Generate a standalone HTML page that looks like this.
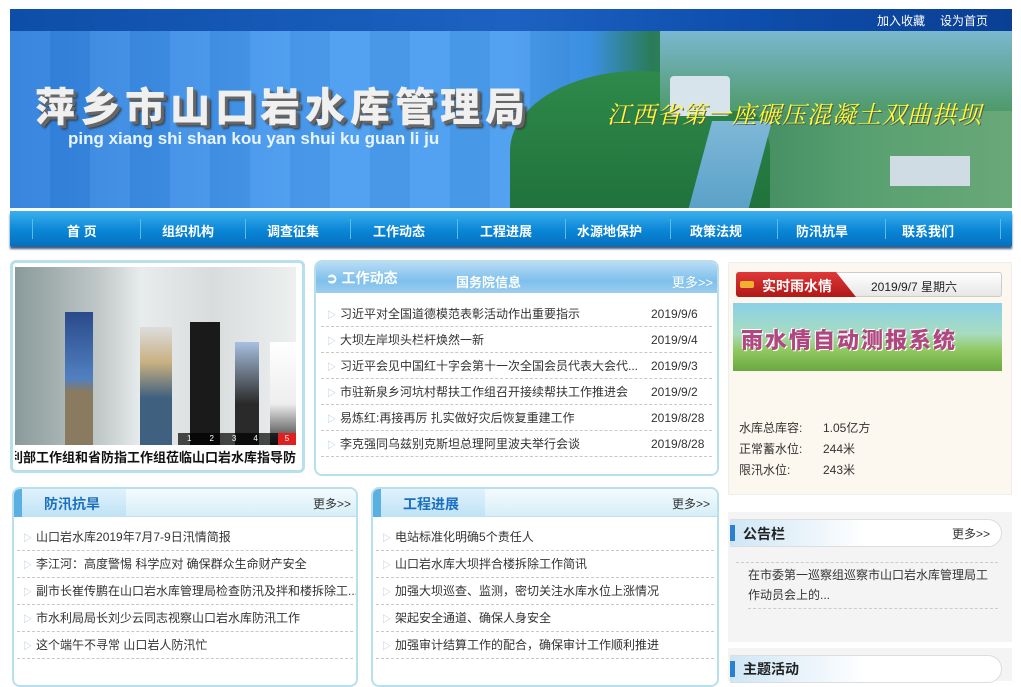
<!DOCTYPE html>
<html><head><meta charset="utf-8"><style>
*{margin:0;padding:0;box-sizing:border-box}
body{width:1021px;height:681px;overflow:hidden;background:#fff;font-family:"Liberation Sans","Noto Sans CJK SC",sans-serif;font-size:12px;color:#333;position:relative}
.a{position:absolute}
.top{left:10px;top:9px;width:1002px;height:22px;background:linear-gradient(90deg,#0d4ea8 0%,#1d62c2 50%,#0f4fae 72%,#0a3f94 100%)}
.top span{position:absolute;top:3px;color:#fff;font-size:12px}
.ban{left:10px;top:31px;width:1002px;height:177px;background:linear-gradient(90deg,#2f7fdc 0%,#4a9cf0 30%,#4a9df0 50%,#3b8fe0 58%,#2a7c58 64%,#3f8a60 72%,#58a070 85%,#6aa878 100%);overflow:hidden}
.nav{left:10px;top:211px;width:1002px;height:35px;background:linear-gradient(#3bb0ee,#0a86d6 55%,#0670c0);box-shadow:0 3px 2px #3a5f88}
.nav span{position:absolute;top:10px;color:#fff;font-weight:bold;font-size:13px}
.nav i{position:absolute;top:8px;width:1px;height:20px;background:#5bbce8}
.box{border:3px solid #b8e0ec;border-radius:6px}
.row{position:absolute;left:0;right:0;height:26px;border-bottom:1px dashed #c8c8c8;font-size:12px;color:#333;line-height:26px;white-space:nowrap}
.row b{font-weight:normal;color:#a8c4e0;font-size:9px;margin:0 4px 0 6px}
.dt{position:absolute;left:330px;top:0}
.hd{height:28px;background:linear-gradient(#f4fbfe,#d6eef8);border-bottom:1px solid #c4dcea}
</style></head><body>
<div class="a top"><span style="left:867px">加入收藏</span><span style="left:930px">设为首页</span></div>
<div class="a ban">
 <div class="a" style="left:0;top:0;width:560px;height:177px;background:repeating-linear-gradient(90deg,rgba(255,255,255,.05) 0 40px,rgba(0,0,0,.03) 40px 80px)"></div>
 <div class="a" style="left:500px;top:40px;width:260px;height:160px;border-radius:50% 50% 0 0;background:linear-gradient(#2e8a4a,#1f6e3a)"></div>
 <div class="a" style="left:650px;top:0;width:352px;height:80px;background:linear-gradient(#7ab8d0,#4f9a6a)"></div>
 <div class="a" style="left:690px;top:90px;width:60px;height:90px;background:linear-gradient(#7fb8d8,#5aa0c8);transform:skewX(-15deg)"></div>
 <div class="a" style="left:660px;top:45px;width:60px;height:40px;background:#d8e4ec;border-radius:4px"></div>
 <div class="a" style="left:880px;top:125px;width:80px;height:30px;background:#d0dce4"></div>
 <div class="a" style="left:25px;top:44px;font-size:40px;font-weight:900;color:#f0f0f0;letter-spacing:5px;text-shadow:3px 3px 0 #666,4px 4px 2px #333;font-family:'Noto Sans CJK SC',sans-serif">萍乡市山口岩水库管理局</div>
 <div class="a" style="left:58px;top:98px;font-size:17px;font-weight:bold;color:#e8f4ff">ping xiang shi shan kou yan shui ku guan li ju</div>
 <div class="a" style="left:597px;top:64px;font-size:24px;color:#ffff30;font-style:italic;font-family:'Noto Serif CJK SC',serif;letter-spacing:1px;text-shadow:1px 1px 0 #555">江西省第一座碾压混凝土双曲拱坝</div>
</div>
<div class="a nav">
 <i style="left:22px"></i><span style="left:57px">首 页</span><i style="left:130px"></i><span style="left:152px">组织机构</span><i style="left:235px"></i><span style="left:257px">调查征集</span><i style="left:340px"></i><span style="left:363px">工作动态</span><i style="left:447px"></i><span style="left:470px">工程进展</span><i style="left:555px"></i><span style="left:567px">水源地保护</span><i style="left:660px"></i><span style="left:680px">政策法规</span><i style="left:767px"></i><span style="left:786px">防汛抗旱</span><i style="left:875px"></i><span style="left:892px">联系我们</span><i style="left:990px"></i>
</div>
<div class="a box" style="left:10px;top:260px;width:295px;height:213px"></div>
<div class="a" style="left:15px;top:267px;width:281px;height:178px;background:linear-gradient(90deg,#8a9a9a 0%,#c0c8c8 30%,#e8ecec 45%,#d8dcdc 70%,#eef0f0 100%);overflow:hidden">
 <div class="a" style="left:50px;top:45px;width:28px;height:133px;background:linear-gradient(#2a4a8a,#5080c0 50%,#8a7a60 60%)"></div>
 <div class="a" style="left:125px;top:60px;width:32px;height:118px;background:linear-gradient(#ddd,#c8b080 30%,#406080 60%)"></div>
 <div class="a" style="left:175px;top:55px;width:30px;height:123px;background:#1a1a1a"></div>
 <div class="a" style="left:220px;top:75px;width:24px;height:103px;background:linear-gradient(#a8c0e0,#2a2a2a 60%)"></div>
 <div class="a" style="left:255px;top:75px;width:26px;height:103px;background:linear-gradient(#fff,#eee 60%,#333)"></div>
 <div class="a" style="left:163px;top:166px;height:12px;width:118px;background:rgba(0,0,0,.7);color:#fff;font-size:8px;line-height:12px"><span style="margin-left:9px">1</span><span style="margin-left:18px">2</span><span style="margin-left:18px">3</span><span style="margin-left:17px">4</span><span style="position:absolute;right:0;width:18px;height:12px;background:#e02020;text-align:center">5</span></div>
</div>
<div class="a" style="left:15px;top:447px;width:281px;height:18px;overflow:hidden;white-space:nowrap;font-size:13px;font-weight:bold;color:#111;direction:rtl"><span style="direction:ltr;unicode-bidi:embed">水利部工作组和省防指工作组莅临山口岩水库指导防</span></div>
<div class="a box" style="left:314px;top:260px;width:405px;height:216px;border-width:2px;border-radius:8px;background:#fff;overflow:hidden">
 <div style="height:31px;background:linear-gradient(#b8dcf4,#7ec0ec 60%,#9ccdef)"></div>
 <div class="a" style="left:10px;top:6px;color:#fff;font-size:14px;font-weight:bold">➲ 工作动态</div>
 <div class="a" style="left:140px;top:10px;color:#fff;font-size:13px;font-weight:bold">国务院信息</div>
 <div class="a" style="right:4px;top:10px;color:#fff;font-size:13px">更多&gt;&gt;</div>
 <div class="a" style="left:5px;right:5px;top:39px">
  <div class="row" style="top:0"><b>▷</b>习近平对全国道德模范表彰活动作出重要指示<span class="dt">2019/9/6</span></div>
  <div class="row" style="top:26px"><b>▷</b>大坝左岸坝头栏杆焕然一新<span class="dt">2019/9/4</span></div>
  <div class="row" style="top:52px"><b>▷</b>习近平会见中国红十字会第十一次全国会员代表大会代...<span class="dt">2019/9/3</span></div>
  <div class="row" style="top:78px"><b>▷</b>市驻新泉乡河坑村帮扶工作组召开接续帮扶工作推进会<span class="dt">2019/9/2</span></div>
  <div class="row" style="top:104px"><b>▷</b>易炼红:再接再厉 扎实做好灾后恢复重建工作<span class="dt">2019/8/28</span></div>
  <div class="row" style="top:130px"><b>▷</b>李克强同乌兹别克斯坦总理阿里波夫举行会谈<span class="dt">2019/8/28</span></div>
 </div>
</div>
<div class="a" style="left:728px;top:262px;width:284px;height:233px;background:#fdf8ef;border:1px solid #eee"></div>
<div class="a" style="left:736px;top:272px;width:266px;height:25px;border:1px solid #ccc;border-radius:3px;background:linear-gradient(#fff,#e6e6e6)"></div>
<div class="a" style="left:736px;top:272px;width:120px;height:25px;background:linear-gradient(#e03838,#b01818);clip-path:polygon(0 0,100px 0,120px 100%,0 100%);border-radius:3px 0 0 3px"></div>
<div class="a" style="left:740px;top:281px;width:14px;height:7px;background:#f0b030;border-radius:2px"></div>
<div class="a" style="left:762px;top:276px;color:#fff;font-size:14px;font-weight:bold">实时雨水情</div>
<div class="a" style="left:871px;top:278px;font-size:12px;color:#222">2019/9/7 星期六</div>
<div class="a" style="left:733px;top:303px;width:269px;height:68px;background:linear-gradient(#8ad0e8,#a8dcc0 45%,#90c860 70%,#6aa840)">
 <div class="a" style="left:8px;top:20px;font-size:22px;font-weight:900;color:#b04880;letter-spacing:2px;text-shadow:1px 1px 0 #fff,-1px -1px 0 #fff">雨水情自动测报系统</div>
</div>
<div class="a" style="left:739px;top:418px;line-height:21px;font-size:12px">水库总库容:<br>正常蓄水位:<br>限汛水位:</div>
<div class="a" style="left:823px;top:418px;line-height:21px;font-size:12px">1.05亿方<br>244米<br>243米</div>
<div class="a box" style="left:12px;top:487px;width:346px;height:200px;border-width:2px;border-radius:8px;overflow:hidden">
 <div class="hd"></div>
 <div class="a" style="left:0;top:0;width:8px;height:28px;background:#5ab0e0"></div>
 <div class="a" style="left:8px;top:0;width:104px;height:28px;background:linear-gradient(#e0f2fc,#bfe2f6)"></div>
 <div class="a" style="left:30px;top:5px;color:#1a6fc0;font-size:14px;font-weight:bold">防汛抗旱</div>
 <div class="a" style="right:5px;top:6px;font-size:12px">更多&gt;&gt;</div>
 <div class="a" style="left:3px;right:3px;top:35px">
  <div class="row" style="top:0;height:27px;line-height:27px"><b>▷</b>山口岩水库2019年7月7-9日汛情简报</div>
  <div class="row" style="top:27px;height:27px;line-height:27px"><b>▷</b>李江河：高度警惕 科学应对 确保群众生命财产安全</div>
  <div class="row" style="top:54px;height:27px;line-height:27px"><b>▷</b>副市长崔传鹏在山口岩水库管理局检查防汛及拌和楼拆除工...</div>
  <div class="row" style="top:81px;height:27px;line-height:27px"><b>▷</b>市水利局局长刘少云同志视察山口岩水库防汛工作</div>
  <div class="row" style="top:108px;height:27px;line-height:27px"><b>▷</b>这个端午不寻常 山口岩人防汛忙</div>
 </div>
</div>
<div class="a box" style="left:371px;top:487px;width:348px;height:200px;border-width:2px;border-radius:8px;overflow:hidden">
 <div class="hd"></div>
 <div class="a" style="left:0;top:0;width:8px;height:28px;background:#5ab0e0"></div>
 <div class="a" style="left:8px;top:0;width:104px;height:28px;background:linear-gradient(#e0f2fc,#bfe2f6)"></div>
 <div class="a" style="left:30px;top:5px;color:#1a6fc0;font-size:14px;font-weight:bold">工程进展</div>
 <div class="a" style="right:7px;top:6px;font-size:12px">更多&gt;&gt;</div>
 <div class="a" style="left:3px;right:3px;top:35px">
  <div class="row" style="top:0;height:27px;line-height:27px"><b>▷</b>电站标准化明确5个责任人</div>
  <div class="row" style="top:27px;height:27px;line-height:27px"><b>▷</b>山口岩水库大坝拌合楼拆除工作简讯</div>
  <div class="row" style="top:54px;height:27px;line-height:27px"><b>▷</b>加强大坝巡查、监测，密切关注水库水位上涨情况</div>
  <div class="row" style="top:81px;height:27px;line-height:27px"><b>▷</b>架起安全通道、确保人身安全</div>
  <div class="row" style="top:108px;height:27px;line-height:27px"><b>▷</b>加强审计结算工作的配合，确保审计工作顺利推进</div>
 </div>
</div>
<div class="a" style="left:728px;top:512px;width:284px;height:130px;background:#f4f4f4"></div>
<div class="a" style="left:730px;top:519px;width:272px;height:28px;border-radius:0 14px 14px 0;background:linear-gradient(90deg,#cfe6f6,#fff 50%,#fff);border:1px solid #ddd"></div>
<div class="a" style="left:730px;top:525px;width:5px;height:16px;background:#2a80d0"></div>
<div class="a" style="left:743px;top:524px;font-size:14px;font-weight:bold;color:#222">公告栏</div>
<div class="a" style="left:952px;top:525px;font-size:12px">更多&gt;&gt;</div>
<div class="a" style="left:736px;top:562px;width:262px;height:50px;border-top:1px dashed #ccc;overflow:hidden;font-size:12px;line-height:20px;padding:2px 0 0 12px">在市委第一巡察组巡察市山口岩水库管理局工作动员会上的...<div style="border-top:1px dashed #ccc;color:#666;margin-top:3px">在巡察市山口岩水库管理局党总支工作动员会</div></div>
<div class="a" style="left:728px;top:648px;width:284px;height:33px;background:#f4f4f4"></div>
<div class="a" style="left:730px;top:655px;width:272px;height:28px;border-radius:0 14px 14px 0;background:linear-gradient(90deg,#cfe6f6,#fff 50%,#fff);border:1px solid #ddd"></div>
<div class="a" style="left:730px;top:661px;width:5px;height:16px;background:#2a80d0"></div>
<div class="a" style="left:743px;top:659px;font-size:14px;font-weight:bold;color:#222">主题活动</div>
</body></html>
